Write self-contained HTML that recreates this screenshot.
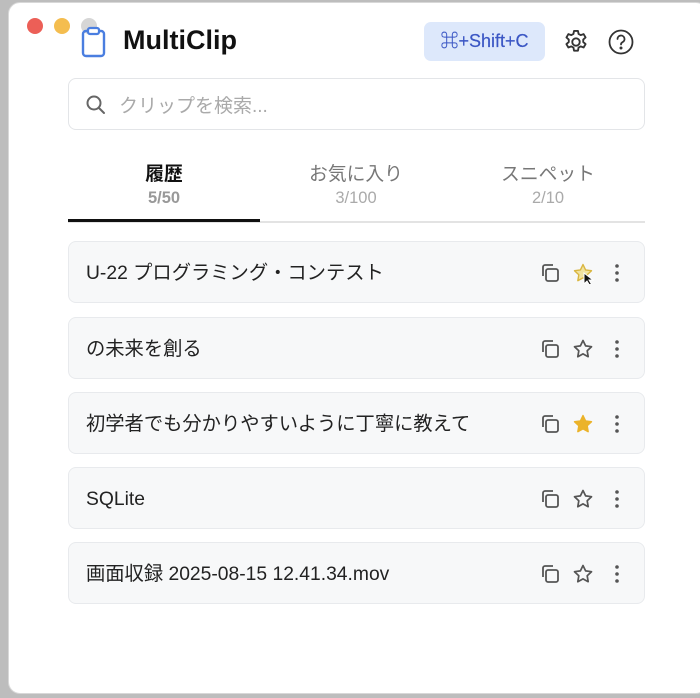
<!DOCTYPE html>
<html><head><meta charset="utf-8"><style>
*{margin:0;padding:0;box-sizing:border-box}
body{width:700px;height:698px;background:#bdbdbd;position:relative;overflow:hidden;font-family:"Liberation Sans","Noto Sans CJK JP",sans-serif}
.win{position:absolute;left:8px;top:2px;width:700px;height:692px;background:#fff;border-radius:12px;border:1px solid #d8d8d8}
.dot{position:absolute;width:16px;height:16px;border-radius:50%;top:18px}
.abs{position:absolute}
.card{position:absolute;left:68px;width:577px;height:62px;background:#f7f8f9;border:1px solid #e8eaed;border-radius:8px}
.card .t{position:absolute;left:17px;top:20px;height:24px;line-height:24px;font-size:19.3px;color:#222;white-space:nowrap}
.card svg{position:absolute;top:20px}
.tab{position:absolute;width:192px;text-align:center}
.tab .l{font-size:18.8px;color:#777}
.tab .c{font-size:16.5px;color:#aaa;margin-top:3px}
</style></head><body>
<div class="win"></div>
<div class="dot" style="left:27px;background:#ec5f57"></div>
<div class="dot" style="left:54px;background:#f4bd4f"></div>
<div class="dot" style="left:81px;background:#d6d6d6"></div>
<svg class="abs" style="left:80px;top:26px" width="28" height="32" viewBox="0 0 28 32"><rect x="3" y="5" width="21" height="25" rx="3" fill="none" stroke="#4a7ee0" stroke-width="2.4"/><rect x="8" y="2" width="11" height="6" rx="2" fill="#fff" stroke="#4a7ee0" stroke-width="2.2"/></svg>
<div class="abs" style="left:123px;top:25px;font-size:27px;font-weight:bold;color:#111">MultiClip</div>
<div class="abs" style="left:424px;top:22px;width:121px;height:39px;background:#dde8fb;border-radius:7px;color:#3a56c4;font-size:18px;text-align:center;line-height:39px;-webkit-text-stroke:0.2px #3a56c4">⌘+Shift+C</div>
<svg class="abs" style="left:562px;top:28px" width="28" height="28" viewBox="0 0 24 24" fill="none" stroke="#333" stroke-width="1.6" stroke-linejoin="round"><path d="M10.3 2.5h3.4l.5 2.6 1.8 1 2.5-.9 1.7 2.9-2 1.8v2.1l2 1.8-1.7 2.9-2.5-.9-1.8 1-.5 2.6h-3.4l-.5-2.6-1.8-1-2.5.9-1.7-2.9 2-1.8V9.9l-2-1.8 1.7-2.9 2.5.9 1.8-1z"/><circle cx="12" cy="12" r="3.2"/></svg>
<svg class="abs" style="left:607px;top:28px" width="28" height="28" viewBox="0 0 28 28" fill="none" stroke="#333" stroke-width="1.8" stroke-linecap="round"><circle cx="14" cy="14" r="11.5"/><path d="M10.5 11a3.5 3.5 0 1 1 5 3.2c-1 .5-1.5 1.2-1.5 2.3"/><circle cx="14" cy="20" r=".6" fill="#333"/></svg>
<div class="abs" style="left:68px;top:78px;width:577px;height:52px;border:1px solid #e3e5e8;border-radius:8px"></div>
<svg class="abs" style="left:85px;top:94px" width="22" height="22" viewBox="0 0 22 22" fill="none" stroke="#666" stroke-width="2" stroke-linecap="round"><circle cx="9" cy="9" r="6.5"/><path d="M14 14l5 5"/></svg>
<div class="abs" style="left:119px;top:91px;font-size:19px;color:#aaa">クリップを検索...</div>
<div class="tab" style="left:68px;top:159px"><div class="l" style="color:#111;font-weight:bold">履歴</div><div class="c" style="color:#999;font-weight:bold">5/50</div></div>
<div class="tab" style="left:260px;top:159px"><div class="l">お気に入り</div><div class="c">3/100</div></div>
<div class="tab" style="left:452px;top:159px"><div class="l">スニペット</div><div class="c">2/10</div></div>
<div class="abs" style="left:68px;top:221px;width:577px;height:2px;background:#e3e3e3"></div>
<div class="abs" style="left:68px;top:219px;width:192px;height:3px;background:#111"></div>

<div class="card" style="top:241px"><div class="t">U-22 プログラミング・コンテスト</div>
<svg style="left:470px" width="22" height="22" viewBox="0 0 22 22" fill="none" stroke="#555" stroke-width="1.8"><rect x="7" y="7" width="12" height="12" rx="2"/><path d="M4 14V5a2 2 0 0 1 2-2h8"/></svg>
<svg style="left:503px" width="22" height="22" viewBox="0 0 22 22"><path d="M11 2.5l2.6 5.4 5.9.8-4.3 4.1 1 5.9L11 15.9l-5.2 2.8 1-5.9-4.3-4.1 5.9-.8z" fill="#f1e3a0" stroke="#d9b640" stroke-width="1.4" stroke-linejoin="round"/><path d="M12 11l0 11 3-3 3 5 2-1-3-5h4z" fill="#111" stroke="#fff" stroke-width="1"/></svg>
<svg style="left:540px" width="16" height="22" viewBox="0 0 16 22" fill="#555"><circle cx="8" cy="4" r="1.8"/><circle cx="8" cy="11" r="1.8"/><circle cx="8" cy="18" r="1.8"/></svg></div>

<div class="card" style="top:317px"><div class="t">の未来を創る</div>
<svg style="left:470px" width="22" height="22" viewBox="0 0 22 22" fill="none" stroke="#555" stroke-width="1.8"><rect x="7" y="7" width="12" height="12" rx="2"/><path d="M4 14V5a2 2 0 0 1 2-2h8"/></svg>
<svg style="left:503px" width="22" height="22" viewBox="0 0 22 22"><path d="M11 2.5l2.6 5.4 5.9.8-4.3 4.1 1 5.9L11 15.9l-5.2 2.8 1-5.9-4.3-4.1 5.9-.8z" fill="none" stroke="#555" stroke-width="1.7" stroke-linejoin="round"/></svg>
<svg style="left:540px" width="16" height="22" viewBox="0 0 16 22" fill="#555"><circle cx="8" cy="4" r="1.8"/><circle cx="8" cy="11" r="1.8"/><circle cx="8" cy="18" r="1.8"/></svg></div>

<div class="card" style="top:392px"><div class="t">初学者でも分かりやすいように丁寧に教えて</div>
<svg style="left:470px" width="22" height="22" viewBox="0 0 22 22" fill="none" stroke="#555" stroke-width="1.8"><rect x="7" y="7" width="12" height="12" rx="2"/><path d="M4 14V5a2 2 0 0 1 2-2h8"/></svg>
<svg style="left:503px" width="22" height="22" viewBox="0 0 22 22"><path d="M11 2.5l2.6 5.4 5.9.8-4.3 4.1 1 5.9L11 15.9l-5.2 2.8 1-5.9-4.3-4.1 5.9-.8z" fill="#ebb32a" stroke="#ebb32a" stroke-width="1.4" stroke-linejoin="round"/></svg>
<svg style="left:540px" width="16" height="22" viewBox="0 0 16 22" fill="#555"><circle cx="8" cy="4" r="1.8"/><circle cx="8" cy="11" r="1.8"/><circle cx="8" cy="18" r="1.8"/></svg></div>

<div class="card" style="top:467px"><div class="t">SQLite</div>
<svg style="left:470px" width="22" height="22" viewBox="0 0 22 22" fill="none" stroke="#555" stroke-width="1.8"><rect x="7" y="7" width="12" height="12" rx="2"/><path d="M4 14V5a2 2 0 0 1 2-2h8"/></svg>
<svg style="left:503px" width="22" height="22" viewBox="0 0 22 22"><path d="M11 2.5l2.6 5.4 5.9.8-4.3 4.1 1 5.9L11 15.9l-5.2 2.8 1-5.9-4.3-4.1 5.9-.8z" fill="none" stroke="#555" stroke-width="1.7" stroke-linejoin="round"/></svg>
<svg style="left:540px" width="16" height="22" viewBox="0 0 16 22" fill="#555"><circle cx="8" cy="4" r="1.8"/><circle cx="8" cy="11" r="1.8"/><circle cx="8" cy="18" r="1.8"/></svg></div>

<div class="card" style="top:542px"><div class="t">画面収録 2025-08-15 12.41.34.mov</div>
<svg style="left:470px" width="22" height="22" viewBox="0 0 22 22" fill="none" stroke="#555" stroke-width="1.8"><rect x="7" y="7" width="12" height="12" rx="2"/><path d="M4 14V5a2 2 0 0 1 2-2h8"/></svg>
<svg style="left:503px" width="22" height="22" viewBox="0 0 22 22"><path d="M11 2.5l2.6 5.4 5.9.8-4.3 4.1 1 5.9L11 15.9l-5.2 2.8 1-5.9-4.3-4.1 5.9-.8z" fill="none" stroke="#555" stroke-width="1.7" stroke-linejoin="round"/></svg>
<svg style="left:540px" width="16" height="22" viewBox="0 0 16 22" fill="#555"><circle cx="8" cy="4" r="1.8"/><circle cx="8" cy="11" r="1.8"/><circle cx="8" cy="18" r="1.8"/></svg></div>
</body></html>
